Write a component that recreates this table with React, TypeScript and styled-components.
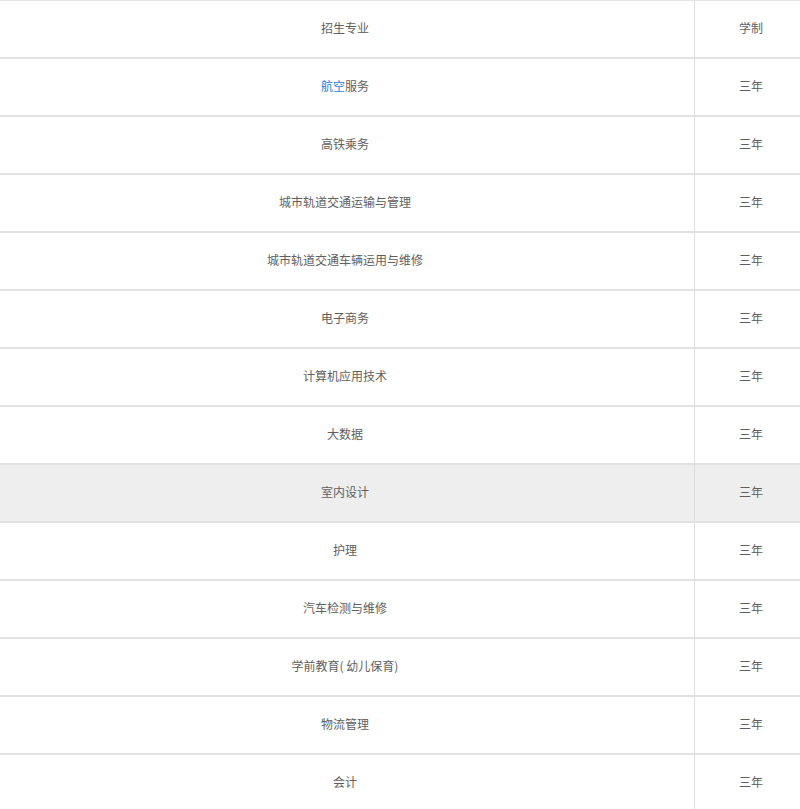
import React from "react";
import styled, { createGlobalStyle } from "styled-components";

const Global = createGlobalStyle`
  html, body { margin: 0; padding: 0; background: #fff; overflow: hidden; }
  body { font-family: "Noto Sans CJK SC", "Noto Sans", sans-serif; }
`;

const Wrap = styled.div`
  width: 800px;
  height: 809px;
  overflow: hidden;
  border-top: 1px solid #e4e4e4;
  box-sizing: border-box;
`;

const Table = styled.div`
  display: grid;
  grid-template-columns: 698px 113px;
  width: 811px;
  margin-left: -4px;
`;

const Cell = styled.div<{ $hl?: boolean; $right?: boolean }>`
  height: 53px;
  padding-bottom: 3px;
  display: flex;
  align-items: center;
  justify-content: center;
  font-size: 12px;
  color: #5e5e5e;
  background: ${(p) => (p.$hl ? "#eeeeee" : "#fff")};
  border-bottom: 2px solid #e2e2e2;
  border-left: ${(p) => (p.$right ? "1px solid #dcdcdc" : "none")};
  box-sizing: content-box;
`;

const Link = styled.span`
  color: #2b7bd8;
`;

const rows: { name: React.ReactNode; years: string }[] = [
  { name: "招生专业", years: "学制" },
  { name: <><Link>航空</Link>服务</>, years: "三年" },
  { name: "高铁乘务", years: "三年" },
  { name: "城市轨道交通运输与管理", years: "三年" },
  { name: "城市轨道交通车辆运用与维修", years: "三年" },
  { name: "电子商务", years: "三年" },
  { name: "计算机应用技术", years: "三年" },
  { name: "大数据", years: "三年" },
  { name: "室内设计", years: "三年" },
  { name: "护理", years: "三年" },
  { name: "汽车检测与维修", years: "三年" },
  { name: "学前教育( 幼儿保育)", years: "三年" },
  { name: "物流管理", years: "三年" },
  { name: "会计", years: "三年" },
];

export default function App() {
  return (
    <>
      <Global />
      <Wrap>
        <Table>
          {rows.map((r, i) => (
            <React.Fragment key={i}>
              <Cell $hl={i === 8}>{r.name}</Cell>
              <Cell $hl={i === 8} $right>{r.years}</Cell>
            </React.Fragment>
          ))}
        </Table>
      </Wrap>
    </>
  );
}
